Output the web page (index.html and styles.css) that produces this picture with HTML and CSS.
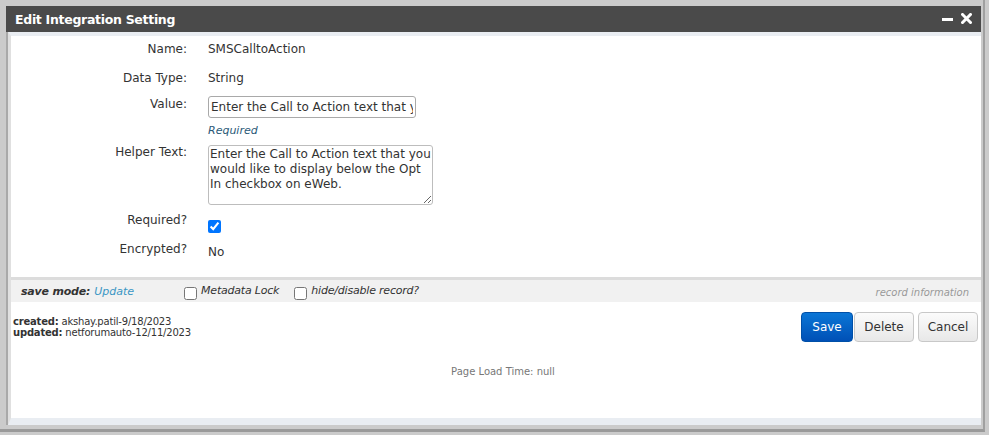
FILE: index.html
```html
<!DOCTYPE html>
<html>
<head>
<meta charset="utf-8">
<title>Edit Integration Setting</title>
<link rel="stylesheet" href="styles.css">
</head>
<body>
<div class="frame">
  <div class="window">
    <div class="titlebar">
      <span class="title">Edit Integration Setting</span>
      <span class="tools">
        <svg class="ico" width="12" height="12" viewBox="0 0 12 12"><rect x="0" y="5" width="11" height="3" fill="#fff"/></svg>
        <svg class="ico" width="11" height="11" viewBox="0 0 11 11"><path d="M1.5 1.5 L9.5 9.5 M9.5 1.5 L1.5 9.5" stroke="#fff" stroke-width="3" stroke-linecap="square"/></svg>
      </span>
    </div>
    <div class="body">
      <div class="inner">
        <div class="form">
          <div class="row r-name"><div class="lbl">Name:</div><div class="val">SMSCalltoAction</div></div>
          <div class="row r-type"><div class="lbl">Data Type:</div><div class="val">String</div></div>
          <div class="row r-value">
            <div class="lbl">Value:</div>
            <div class="val">
              <input class="txt" type="text" value="Enter the Call to Action text that you would like to display below the Opt In checkbox on eWeb.">
              <div class="req">Required</div>
            </div>
          </div>
          <div class="row r-helper">
            <div class="lbl">Helper Text:</div>
            <div class="val"><textarea class="area">Enter the Call to Action text that you would like to display below the Opt In checkbox on eWeb.</textarea></div>
          </div>
          <div class="row r-required"><div class="lbl">Required?</div><div class="val"><input class="chk" type="checkbox" checked></div></div>
          <div class="row r-enc"><div class="lbl">Encrypted?</div><div class="val val-no">No</div></div>
        </div>
        <div class="savebar">
          <span class="sm-label">save mode:</span>
          <span class="sm-value">Update</span>
          <label class="opt opt-lock"><input class="box" type="checkbox"><span>Metadata Lock</span></label>
          <label class="opt"><input class="box" type="checkbox"><span>hide/disable record?</span></label>
          <span class="recinfo">record information</span>
        </div>
        <div class="footer">
          <div class="meta">
            <div><b>created:</b> akshay.patil-9/18/2023</div>
            <div><b>updated:</b> netforumauto-12/11/2023</div>
          </div>
          <div class="buttons">
            <button class="btn btn-save">Save</button>
            <button class="btn btn-del">Delete</button>
            <button class="btn btn-cancel">Cancel</button>
          </div>
        </div>
        <div class="loadtime">Page Load Time: null</div>
      </div>
    </div>
  </div>
</div>
</body>
</html>
```

FILE: styles.css
```css
html, body {
  margin: 0;
  padding: 0;
  background: #cbcbcb;
}
body {
  font-family: "DejaVu Sans", Verdana, sans-serif;
  font-size: 12px;
  color: #333;
}
.frame {
  width: 985px;
  height: 432px;
  border-right: 2px solid #a0a0a0;
  border-bottom: 3px solid #9a9a9a;
  background: #cbcbcb;
  padding: 6px 0 0 6px;
  box-sizing: border-box;
  overflow: hidden;
}
.window {
  width: 975px;
}
.titlebar {
  height: 26px;
  background: #4a4a4a;
  display: flex;
  align-items: center;
  justify-content: space-between;
  padding: 0 9px 0 9px;
  box-sizing: border-box;
}
.title {
  color: #fff;
  font-weight: bold;
  font-size: 12.5px;
  letter-spacing: -0.3px;
}
.tools {
  display: flex;
  align-items: center;
  gap: 7px;
  padding-bottom: 1px;
}
.ico { display: block; }
.body {
  height: 393px;
  background: #fff;
  border-left: 2px solid #a9a9a9;
  box-sizing: border-box;
}
.inner {
  height: 393px;
  border-left: 3px solid #e0e0e0;
  border-top: 4px solid #e9edf2;
  border-bottom: 7px solid #e9edf2;
  box-sizing: border-box;
  display: flex;
  flex-direction: column;
}
.form {
  padding-top: 5px;
}
.row {
  display: grid;
  grid-template-columns: 176px 1fr;
  column-gap: 21px;
  line-height: 16px;
}
.lbl {
  text-align: right;
  color: #333;
}
.val { color: #333; }
.r-type { margin-top: 13px; }
.r-value { margin-top: 10px; }
.r-helper { margin-top: 7px; }
.r-helper .lbl { margin-top: -1px; }
.r-required { margin-top: 7px; }
.r-enc { margin-top: 4px; }
.val-no { padding-top: 3px; }
.txt {
  display: block;
  width: 208px;
  height: 22px;
  box-sizing: border-box;
  border: 1px solid #a9a9a9;
  border-radius: 3px;
  padding: 0 2px;
  font: 12px "DejaVu Sans", Verdana, sans-serif;
  color: #333;
  margin: 0;
}
.req {
  font-size: 11px;
  font-style: italic;
  color: #2b5a78;
  margin-top: 6px;
  line-height: 14px;
}
.area {
  display: block;
  width: 225px;
  height: 60px;
  box-sizing: border-box;
  border: 1px solid #bdbdbd;
  border-radius: 3px;
  padding: 1px 1px;
  font: 12px "DejaVu Sans", Verdana, sans-serif;
  line-height: 15px;
  color: #333;
  resize: both;
  overflow: hidden;
  margin: 0;
}
.chk {
  margin: 8px 0 0 0;
  width: 13px;
  height: 13px;
  accent-color: #0075ff;
}
.savebar {
  margin-top: 17px;
  height: 25px;
  box-sizing: border-box;
  border-top: 3px solid #dcdcdc;
  background: #f1f1f1;
  display: flex;
  align-items: center;
  padding: 0 12px 0 10px;
  font-size: 11px;
  font-style: italic;
}
.sm-label {
  font-weight: bold;
  color: #333;
  letter-spacing: -0.2px;
}
.sm-value {
  color: #3a96c4;
  margin-left: 4px;
}
.opt {
  display: flex;
  align-items: center;
  color: #333;
  letter-spacing: -0.2px;
}
.opt-lock { margin-left: 50px; margin-right: 15px; }
.opt span { margin-bottom: 2px; }
.box {
  margin: 4px 4px 0 0;
  width: 13px;
  height: 13px;
}
.recinfo {
  margin-left: auto;
  color: #999;
  font-size: 10px;
  padding-top: 3px;
}
.footer {
  display: flex;
  justify-content: space-between;
  align-items: flex-start;
  padding: 10px 3px 0 2px;
}
.meta {
  font-size: 10px;
  line-height: 11px;
  color: #333;
  padding-top: 4px;
  letter-spacing: -0.2px;
}
.meta b { color: #333; }
.buttons {
  display: flex;
  gap: 1px;
}
.btn {
  height: 30px;
  box-sizing: border-box;
  border-radius: 4px;
  font: 12px "DejaVu Sans", Verdana, sans-serif;
  padding: 0;
  cursor: pointer;
}
.btn-save {
  width: 52px;
  background: linear-gradient(#0b76d6, #0050b6);
  border: 1px solid #0050a8;
  color: #fff;
}
.btn-del, .btn-cancel {
  background: linear-gradient(#fbfbfb, #e8e8e8);
  border: 1px solid #c8c8c8;
  color: #333;
}
.btn-del { width: 60px; }
.btn-cancel { width: 60px; margin-left: 3px; }
.loadtime {
  text-align: center;
  font-size: 10px;
  color: #777;
  margin-top: 24px;
  padding-left: 14px;
}
```
